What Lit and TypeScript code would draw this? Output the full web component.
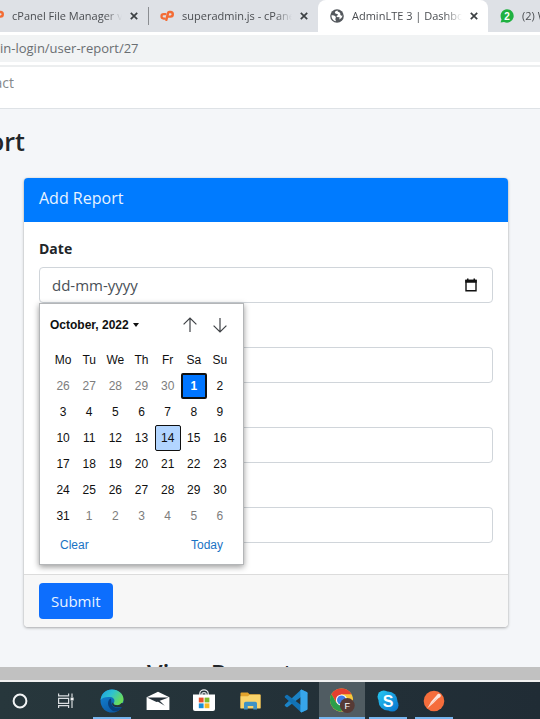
import { LitElement, html, css } from "lit";
import { customElement, state } from "lit/decorators.js";
import { classMap } from "lit/directives/class-map.js";

const cpanel = html`<svg width="16" height="14" viewBox="0 0 16 14" aria-hidden="true" fill="none" stroke="#f36c35" stroke-linecap="round" stroke-linejoin="round">
  <path d="M6.2 4.9H4.2a2.5 2.5 0 0 0 0 5h1.1" stroke-width="2.6"/>
  <path d="M7.200 11.400L9.200 3.600Q9.500 2.500 10.600 2.500H12a2.500 2.500 0 0 1 0 5.200H10.400" stroke-width="2.800"/>
</svg>`;

const globe = html`<svg width="14" height="14" viewBox="0 0 14 14" aria-hidden="true">
  <circle cx="7" cy="7" r="6.8" fill="#54585d"/>
  <path d="M7.6 1.6C5 2.2 4.2 3.4 5.4 4.4c1 .6 2.4.1 2.6 1.3.1.9-1.700.8-1.500 1.700.4 1 2.400.3 3.200 1.200.3.7-.5 1-.7 2 2-.8 3.300-2.200 3.500-4-.8.2-1.800 0-2.100-.8C10 4.800 10.800 4.300 9.600 3.500 8.700 3 7.200 2.800 7.600 1.600zM1.500 6.200c1.400 0 3.600.4 4.200 1.600.5 1.200-.5 1.600-.3 2.700.1.700.600 1 .500 1.800C3.400 11.800 1.300 9.400 1.500 6.200z" fill="#fff"/>
</svg>`;

const whatsapp = html`<svg width="14" height="14" viewBox="0 0 14 14" aria-hidden="true">
  <path d="M7 .3a6.700 6.700 0 1 1-3 12.700L.6 13.600l.9-3.200A6.700 6.700 0 0 1 7 .3z" fill="#1fb141"/>
  <text x="7" y="10.500" text-anchor="middle" font-family="Liberation Sans, sans-serif" font-size="10" font-weight="700" fill="#fff">2</text>
</svg>`;

const closeIcon = html`<svg width="8" height="8" viewBox="0 0 8 8" aria-hidden="true"><path d="M.8.8l6.400 6.400M7.200.8L.8 7.200" stroke="#3c4043" stroke-width="1.700"/></svg>`;

const arrow = (down: boolean) => html`<svg width="14" height="16" viewBox="0 0 14 16" aria-hidden="true" fill="none" stroke="#3f4246" stroke-width="1.200">
  <path d=${down ? "M7 1v14M.6 8.600L7 15l6.400-6.400" : "M7 15V1M.6 7.400L7 1l6.400 6.400"}/></svg>`;

const cortana = html`<svg width="16" height="16" viewBox="0 0 16 16" aria-hidden="true"><circle cx="8" cy="8" r="6.400" fill="none" stroke="#f2f4f5" stroke-width="2"/></svg>`;

const taskView = html`<svg width="18" height="18" viewBox="0 0 18 18" aria-hidden="true" fill="none" stroke="#d9dde0" stroke-width="1.200">
  <path d="M1.600 1.500v2.300h10V1.500M1.600 16v-2.300h10V16M1.600 6.300h10v5h-10zM15 1.500V5M15 9v7"/><path d="M13.600 5.500h3v3h-3z" fill="#f2f4f5" stroke="none"/></svg>`;

const edge = html`<svg width="24" height="24" viewBox="0 0 24 24" aria-hidden="true">
  <defs>
    <linearGradient id="edge-top" x1="0" y1="0" x2="1" y2="0.500"><stop offset="0" stop-color="#1b9de2"/><stop offset=".5" stop-color="#2fc2cf"/><stop offset="1" stop-color="#6bdc58"/></linearGradient>
    <linearGradient id="edge-low" x1="0" y1="0" x2="0.600" y2="1"><stop offset="0" stop-color="#1387d8"/><stop offset="1" stop-color="#0c59a4"/></linearGradient>
  </defs>
  <circle cx="12" cy="12" r="11.500" fill="url(#edge-low)"/>
  <path d="M.6 11C1.300 4.500 6 .5 12 .5c6.500 0 11.500 4.500 11.500 9.700 0 3.600-2.600 6-6.100 6-2.600 0-4.400-.9-3.800-2 1.600-1.800 1.100-5.700-3.100-6.200C6.200 7.500 2 8.500.6 11z" fill="url(#edge-top)"/>
  <path d="M10.800 9.600c-3.600 1.400-4.300 8.400 1.700 12.100 3.500 1.400 7.500-.2 9.500-3.300-2.900 1.100-7.900 1-9.900-2.200-1.300-2.100-.4-4.800-1.300-6.600z" fill="#083f7c"/>
  <path d="M12.400 13.500c-1.300 3 2 5.900 10 4.400l2-3.400-3-.5c-1.200 1.700-2.700 2.200-4.100 2.200-2.600 0-4.400-.9-3.800-2z" fill="#25333a"/>
</svg>`;

const mail = html`<svg width="24" height="20" viewBox="0 0 24 20" aria-hidden="true">
  <path d="M.6 6.300L12 .8l11.400 5.500V19H.6z" fill="#fff"/>
  <path d="M1 6.600h21.600L10.500 11z" fill="#26323a"/><path d="M10.300 9.700l8.500 5.100-5.900-5.900z" fill="#26323a"/>
</svg>`;

const store = html`<svg width="22" height="23" viewBox="0 0 22 23" aria-hidden="true">
  <path d="M6.800 6.500V4.400a4.200 3.600 0 0 1 8.400 0v2.100M9 6V4.500c0-1.300 4-1.300 4 0V6" fill="none" stroke="#e9edef" stroke-width="1.200"/>
  <path d="M0 5.500h22V20q0 2-2 2H2q-2 0-2-2z" fill="#fff"/>
  <path d="M5.800 8.600h4.800v4.800H5.800z" fill="#e8502c"/><path d="M11.600 8.600h4.800v4.800h-4.800z" fill="#7fba2c"/><path d="M5.800 14.400h4.800v4.800H5.800z" fill="#1a8fd8"/><path d="M11.600 14.400h4.800v4.800h-4.800z" fill="#f7b924"/>
</svg>`;

const explorer = html`<svg width="21" height="18" viewBox="0 0 21 18" aria-hidden="true">
  <path d="M.5 1.500q0-1 1-1h6.300l1.800 1.800H19.500q1 0 1 1V16H.5z" fill="#e2a32c"/>
  <path d="M.5 4.200h7.500l1.600-1.500h10.900V16.500H.5z" fill="#fad46b"/>
  <path d="M4 17.500v-6q0-1.700 1.700-1.700h9.600q1.700 0 1.700 1.700v6h-3.700v-3.600H7.700v3.600z" fill="#3f93c5"/>
</svg>`;

const vscode = html`<svg width="24" height="24" viewBox="0 0 24 24" aria-hidden="true">
  <path d="M17.300.6L1 15.500q-.7.700 0 1.400l1.300 1.200q.6.500 1.300 0L23 3.500z" fill="#1b83c6"/>
  <path d="M17.300 23.400L1 8.500q-.7-.7 0-1.400l1.300-1.200q.6-.5 1.300 0L23 20.500z" fill="#1272b5"/>
  <path d="M17.300.6l5.600 2.500q.7.400.7 1.200v15.400q0 .8-.7 1.200l-5.600 2.500-.9-1V1.500z" fill="#37a5ea"/>
</svg>`;

const chrome = html`<svg width="25" height="25" viewBox="0 0 25 25" aria-hidden="true">
  <circle cx="11.500" cy="12" r="11.500" fill="#f8c83a"/>
  <path d="M1.500 6.300A11.500 11.500 0 0 1 21.500 6.300H11.500L6.500 14.800z" fill="#e4402f"/>
  <path d="M1.500 6.300a11.500 11.500 0 0 0 9.600 17.200l5.300-8.600H6.500z" fill="#2b9e4a"/>
  <circle cx="11.500" cy="12" r="5.600" fill="#fff"/><circle cx="11.500" cy="12" r="4.500" fill="#3f7de6"/>
  <circle cx="17.300" cy="17.500" r="7.400" fill="#563a35"/>
  <text x="17.300" y="20.700" text-anchor="middle" font-family="Liberation Sans, sans-serif" font-size="9" fill="#fff">F</text>
</svg>`;

const skype = html`<svg width="22" height="22" viewBox="0 0 22 22" aria-hidden="true">
  <defs><linearGradient id="sky" gradientUnits="userSpaceOnUse" x1="2" y1="2" x2="20" y2="20"><stop offset="0" stop-color="#25c3ef"/><stop offset="1" stop-color="#0a78d0"/></linearGradient></defs>
  <g fill="url(#sky)"><circle cx="6.800" cy="6.800" r="6.300"/><circle cx="15.200" cy="15.200" r="6.300"/><circle cx="11" cy="11" r="9.500"/></g>
  <text x="11" y="16.500" text-anchor="middle" font-family="Liberation Sans, sans-serif" font-size="16" font-weight="700" fill="#fff">S</text>
</svg>`;

const postman = html`<svg width="22" height="22" viewBox="0 0 22 22" aria-hidden="true">
  <circle cx="11" cy="11" r="10.300" fill="#f56d3b"/>
  <path d="M15 3.700q2.700-.4 2.900 2.100-.2 2-2.600 2.400l-5 5.100-5.500 4.400 3.300-5.900z" fill="#fbe5dc"/><path d="M4.600 17.900l9-9.300" stroke="#f9b79c" stroke-width=".7"/>
</svg>`;

const calendarIcon = html`<svg width="14" height="14" viewBox="0 0 14 14" aria-hidden="true">
  <path d="M2 2.500h10v10.300H2z" fill="none" stroke="#111" stroke-width="1.400"/><path d="M1.300 1.800h11.400v3H1.300zM3 .5h1.500v2H3zM9.500.5H11v2H9.500z" fill="#111"/>
</svg>`;

const tabs = [
  { icon: cpanel, title: "cPanel File Manager v3" },
  { icon: cpanel, title: "superadmin.js - cPanel File" },
  { icon: globe, title: "AdminLTE 3 | Dashboard", active: true },
  { icon: whatsapp, title: "(2) WhatsApp" },
];

const apps = [
  { name: "Cortana", icon: cortana },
  { name: "Task view", icon: taskView },
  { name: "Edge", icon: edge, open: true },
  { name: "Mail", icon: mail },
  { name: "Store", icon: store },
  { name: "File Explorer", icon: explorer },
  { name: "Code", icon: vscode },
  { name: "Chrome", icon: chrome, open: true, front: true },
  { name: "Skype", icon: skype, open: true },
  { name: "Postman", icon: postman, open: true },
];

@customElement("browser-tabs")
class BrowserTabs extends LitElement {
  static styles = css`
    :host { display: block; overflow: hidden; background: #dee1e6; }
    .strip { display: flex; height: 32px; margin-left: -22px; }
    .tab { flex: none; box-sizing: border-box; width: 170px; padding: 0 10px 0 12px; display: flex; align-items: center; gap: 8px; color: #4a4d51; }
    .tab.active { background: #fff; border-radius: 8px 8px 0 0; }
    .icon { flex: none; display: flex; width: 14px; }
    .title { flex: 1; min-width: 0; overflow: hidden; white-space: nowrap; font-size: 11px; line-height: 16px; -webkit-mask-image: linear-gradient(90deg, #000 84%, transparent); mask-image: linear-gradient(90deg, #000 84%, transparent); }
    .close { flex: none; display: flex; border: 0; padding: 0; background: none; }
    .rule { align-self: center; flex: none; width: 1px; height: 18px; margin-right: -1px; background: #8a8d91; }
  `;
  render() {
    return html`<nav class="strip" aria-label="Tabs">
      ${tabs.map((t, i) => html`${i === 1 ? html`<span class="rule"></span>` : ""}
        <div class=${classMap({ tab: true, active: !!t.active })}>
          <span class="icon">${t.icon}</span><span class="title">${t.title}</span>
          <button class="close" aria-label="Close tab">${closeIcon}</button>
        </div>`)}
    </nav>`;
  }
}

@customElement("date-popup")
class DatePopup extends LitElement {
  static styles = css`
    :host { display: block; box-sizing: border-box; width: 205px; padding: 8px 10px; background: #fff; border: 1px solid #b4b6b8; box-shadow: 0 2px 6px rgba(0, 0, 0, .4); font: 12px/16px "Liberation Sans", Arial, sans-serif; color: #101010; }
    button { font: inherit; color: inherit; background: none; border: 0; padding: 0; display: flex; align-items: center; justify-content: center; }
    .head { display: flex; align-items: center; height: 26px; padding-right: 6px; }
    .month { flex: 1; justify-content: flex-start; gap: 4px; font-weight: 700; }
    .caret { border: 3px solid transparent; border-top: 4px solid #101010; border-bottom: 0; }
    .step { width: 14px; margin-left: 16px; }
    table { width: 100%; margin-top: 8px; border-collapse: collapse; table-layout: fixed; }
    th, td { height: 26px; padding: 0; font-weight: 400; text-align: center; }
    th { height: 27px; }
    td button { box-sizing: border-box; width: 100%; height: 26px; border-radius: 2px; }
    .dim { color: #7d7d7d; }
    .chosen { background: #0075ff; color: #fff; font-weight: 700; border: 2px solid #101010; }
    .today { background: #b2d5ff; border: 1px solid #101010; }
    .foot { display: flex; justify-content: space-between; padding: 8px 10px 3px; color: #1a73c4; }
  `;
  render() {
    const days = Array.from({ length: 42 }, (_, i) => {
      const n = i - 4;
      return { label: n < 1 ? 30 + n : n > 31 ? n - 31 : n, dim: n < 1 || n > 31, chosen: n === 1, today: n === 14 };
    });
    return html`
      <div class="head">
        <button class="month" type="button">October, 2022 <span class="caret"></span></button>
        <button class="step" type="button" aria-label="Previous month">${arrow(false)}</button>
        <button class="step" type="button" aria-label="Next month">${arrow(true)}</button>
      </div>
      <table>
        <thead><tr>${["Mo", "Tu", "We", "Th", "Fr", "Sa", "Su"].map((d) => html`<th scope="col">${d}</th>`)}</tr></thead>
        <tbody>${[0, 1, 2, 3, 4, 5].map((w) => html`<tr>${days.slice(w * 7, w * 7 + 7).map((d) => html`<td>
          <button type="button" class=${classMap({ dim: d.dim, chosen: d.chosen, today: d.today })}>${d.label}</button></td>`)}</tr>`)}</tbody>
      </table>
      <div class="foot"><button type="button">Clear</button><button type="button">Today</button></div>`;
  }
}

@customElement("report-form")
class ReportForm extends LitElement {
  @state() private open = true;
  static styles = css`
    :host { display: block; }
    .card { margin: 0 32px 0 24px; background: #fff; border-radius: 4px; box-shadow: 0 0 1px rgba(0, 0, 0, .2), 0 1px 3px rgba(0, 0, 0, .3); font-size: 16px; line-height: 24px; }
    .title { margin: 0; padding: 8px 15px 12px; background: #007bff; color: #e8f3ff; border-radius: 4px 4px 0 0; font-size: 16px; font-weight: 400; line-height: 24px; }
    .body { display: grid; gap: 44px; padding: 15px 15px 31px; }
    .group { position: relative; }
    .group label { display: block; margin-bottom: 6px; font-size: 14px; font-weight: 700; color: #212529; }
    .box { display: flex; align-items: center; box-sizing: border-box; height: 36px; padding: 0 14px 0 12px; border: 1px solid #d0d5da; border-radius: 4px; background: #fff; }
    .box input { flex: 1; min-width: 0; padding: 0; border: 0; outline: 0; background: none; font: inherit; font-size: 15px; color: #495057; }
    .box input::placeholder { color: #495057; opacity: 1; }
    .pick { display: flex; border: 0; padding: 0; background: none; }
    .popup { position: absolute; z-index: 1; top: 100%; left: 0; }
    .foot { padding: 8px 15px; background: #f7f7f7; border-top: 1px solid #dcdcdc; border-radius: 0 0 4px 4px; }
    .submit { display: block; height: 36px; padding: 0 12px; border: 0; border-radius: 4px; background: #0d6efd; color: #e8f3ff; font: inherit; font-size: 15px; }
  `;
  render() {
    return html`<form class="card" @submit=${(e: Event) => e.preventDefault()}>
      <h2 class="title">Add Report</h2>
      <div class="body">
        <div class="group">
          <label for="date">Date</label>
          <div class="box"><input id="date" placeholder="dd-mm-yyyy">
            <button class="pick" type="button" aria-label="Show date picker" @click=${() => (this.open = !this.open)}>${calendarIcon}</button></div>
          ${this.open ? html`<date-popup class="popup"></date-popup>` : ""}
        </div>
        ${["Field 2", "Field 3", "Field 4"].map((f) => html`<div class="box"><input aria-label=${f}></div>`)}
      </div>
      <div class="foot"><button class="submit">Submit</button></div>
    </form>`;
  }
}

@customElement("task-bar")
class TaskBar extends LitElement {
  static styles = css`
    :host { display: block; overflow: hidden; background: linear-gradient(90deg, #27373c, #202c35); }
    .row { display: flex; margin-left: -3px; }
    .app { position: relative; flex: none; box-sizing: border-box; width: 46px; height: 37px; padding: 0; border: 0; background: none; display: flex; align-items: center; justify-content: center; }
    .open::after { content: ""; position: absolute; bottom: 0; left: 4px; right: 4px; height: 2px; background: #76b5ef; }
    .front { background: #505c62; }
    .front::after { left: 0; right: 0; }
  `;
  render() {
    return html`<nav class="row" aria-label="Applications">${apps.map((a) => html`<button aria-label=${a.name}
      class=${classMap({ app: true, open: !!a.open, front: !!a.front })}>${a.icon}</button>`)}</nav>`;
  }
}

@customElement("app-root")
class AppRoot extends LitElement {
  static styles = css`
    :host { display: flex; flex-direction: column; height: 100vh; overflow: hidden; background: #f4f6f9; color: #212529; font-family: "Open Sans", "Noto Sans", sans-serif; }
    .address { flex: none; padding: 3px 0; background: #fff; border-bottom: 2px solid #eceeef; }
    .url { box-sizing: border-box; width: 100%; height: 27px; display: block; border: 0; padding: 0; outline: 0; background: #f1f3f4; color: #6a6e72; font: 13px/27px "Open Sans", "Noto Sans", sans-serif; }
    .menu { flex: none; height: 41px; background: #fff; border-bottom: 1px solid #dee2e6; }
    .clip { display: flex; justify-content: flex-end; overflow: hidden; white-space: nowrap; }
    .link { width: 14px; color: #85898d; font-size: 14px; line-height: 32px; text-decoration: none; }
    .page { flex: 1; min-height: 0; overflow: hidden; }
    .heading { width: 25px; margin: 0; padding: 16px 0 20px; font-size: 25px; line-height: 33px; font-weight: 600; }
    .next { margin: 30px 0 0; padding-left: 147px; font-size: 25px; line-height: 33px; font-weight: 600; }
    .scroll { flex: none; height: 13px; background: #c1c1c1; border-bottom: 2px solid #f1f1f1; }
    .bar { flex: none; }
  `;
  render() {
    return html`
      <browser-tabs class="bar"></browser-tabs>
      <div class="address"><input class="url" aria-label="Address" .value=${"in-login/user-report/27"}></div>
      <div class="menu"><a class="link clip" href="#">act</a></div>
      <main class="page">
        <h1 class="heading clip">ort</h1>
        <report-form></report-form>
        <h2 class="next">View Report</h2>
      </main>
      <div class="scroll"></div>
      <task-bar class="bar"></task-bar>`;
  }
}
